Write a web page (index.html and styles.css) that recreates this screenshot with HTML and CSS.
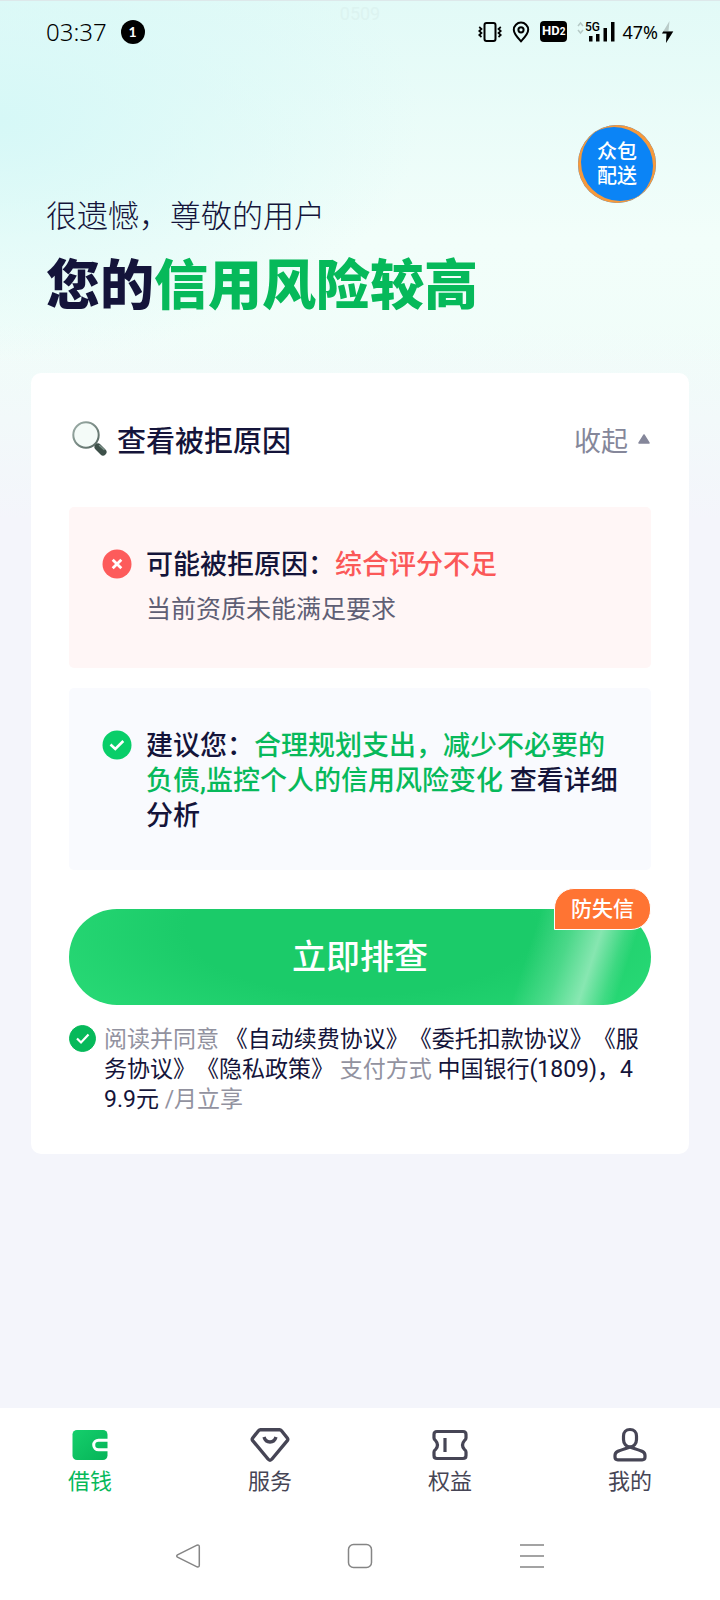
FILE: index.html
```html
<!DOCTYPE html>
<html lang="zh-CN">
<head>
<meta charset="utf-8">
<meta name="viewport" content="width=device-width, initial-scale=1">
<title>信用风险</title>
<link rel="stylesheet" href="styles.css">
</head>
<body>
<div class="screen">
  <div class="status">
    <span class="status-time">03:37</span>
    <span class="status-count">1</span>
    <span class="status-mark">0509</span>
    <div class="status-icons">
      <svg width="24" height="22" viewBox="0 0 24 22" fill="none" stroke="#000"><rect x="6.500" y="2" width="11" height="18" rx="2" stroke-width="2"/><path d="M1.200 6l2.300 2-2.300 2 2.300 2-2.300 2 2.300 2M22.800 6l-2.300 2 2.300 2-2.300 2 2.300 2-2.300 2" stroke-width="1.700"/></svg>
      <svg width="18" height="22" viewBox="0 0 18 22" fill="none" stroke="#000" stroke-width="2"><path d="M9 20.300C5.500 16.500 1.800 13 1.800 8.800a7.200 7.200 0 0 1 14.400 0c0 4.200-3.700 7.700-7.200 11.500z"/><circle cx="9" cy="8.800" r="2.600"/></svg>
      <span class="status-hd">HD<small>2</small></span>
      <svg class="signal" width="38" height="22" viewBox="0 0 38 22"><path d="M1 5l2.500-3 2.500 3M1 9l2.500 3 2.500-3" fill="none" stroke="#b5c9c6" stroke-width="1.500"/><text class="signal-label" x="8" y="10">5G</text><path d="M12 15h3.500v5.500h-3.500zM19 13h3.500v7.500h-3.500zM26.500 7h3.500v13.500h-3.500zM34 1h3.500v19.500h-3.500z"/></svg>
      <span class="status-battery">47%</span>
      <svg class="bolt" width="13" height="24" viewBox="0 0 13 24"><path d="M8.500 1L1 13.500h4.500L5 23l7.500-12H7.500z" fill="#b9cbc8"/><path d="M2.200 11.500L1 13.500h4.500L5 23l7.200-11.500z"/></svg>
    </div>
  </div>

  <header class="hero">
    <div class="hero-text">
      <p class="greeting">很遗憾，尊敬的用户</p>
      <h1 class="headline">您的<em>信用风险较高</em></h1>
    </div>
    <button class="float-entry" type="button">众包<br>配送</button>
  </header>

  <main class="card">
    <div class="card-head">
      <svg class="lens" width="36" height="36" viewBox="0 0 36 36"><defs><linearGradient id="rim" x1="0" y1="0" x2="1" y2="1"><stop offset="0" stop-color="#9fb0aa"/><stop offset="1" stop-color="#53645e"/></linearGradient></defs><path d="M23 23l3 3" stroke="#53645e" stroke-width="3"/><path d="M26 26l5 5" stroke="#3d5049" stroke-width="7" stroke-linecap="round"/><path d="M27.500 24.500l4.500 4" stroke="#7d9189" stroke-width="1.500" stroke-linecap="round"/><circle cx="14" cy="14" r="12.700" fill="#f4fbf8" stroke="url(#rim)" stroke-width="2"/></svg>
      <h2 class="card-title">查看被拒原因</h2>
      <button class="collapse" type="button">收起<svg width="14" height="12" viewBox="0 0 14 12"><path d="M7 2l5 8H2z" fill="#85879a" stroke="#85879a" stroke-width="1.500" stroke-linejoin="round"/></svg></button>
    </div>

    <section class="panel panel-reason">
      <svg class="panel-icon" width="30" height="30" viewBox="0 0 30 30"><circle cx="15" cy="15" r="14.500" fill="#fd5b5b"/><path d="M10.700 10.700l8.600 8.600M19.300 10.700l-8.600 8.600" stroke="#fff" stroke-width="2.800"/></svg>
      <div>
        <p class="panel-main">可能被拒原因：<span class="bad">综合评分不足</span></p>
        <p class="panel-sub">当前资质未能满足要求</p>
      </div>
    </section>

    <section class="panel panel-advice">
      <svg class="panel-icon" width="30" height="30" viewBox="0 0 30 30"><circle cx="15" cy="15" r="14.500" fill="#09ce69"/><path d="M8.500 14.500l4.800 4.500 8-8" fill="none" stroke="#fff" stroke-width="2.600"/></svg>
      <p class="panel-main">建议您：<span class="good">合理规划支出，减少不必要的负债,监控个人的信用风险变化</span> <a class="detail" href="#">查看详细分析</a></p>
    </section>

    <div class="action">
      <button class="submit" type="button">立即排查</button>
      <span class="tag">防失信</span>
    </div>

    <div class="agree">
      <input class="agree-box" type="checkbox" id="agree" checked>
      <p class="agree-text"><label class="muted" for="agree">阅读并同意</label> <a href="#">《自动续费协议》</a><a href="#">《委托扣款协议》</a><a href="#">《服务协议》</a><a href="#">《隐私政策》</a> <span class="muted">支付方式</span> 中国银行(1809)，49.9元 <span class="muted">/月立享</span></p>
    </div>
  </main>

  <footer class="bottom">
    <nav class="tabs">
      <a class="tab tab-on" href="#"><svg width="40" height="36" viewBox="0 0 40 36"><defs><linearGradient id="wallet" x1="0" y1="0" x2="1" y2="1"><stop offset="0" stop-color="#15cf6c"/><stop offset="1" stop-color="#06b458"/></linearGradient></defs><rect x="2.500" y="3" width="35" height="30" rx="4.500" fill="url(#wallet)"/><path d="M38.500 13.200H28.500a4.800 4.800 0 0 0 0 9.600h10" fill="none" stroke="#fff" stroke-width="3"/></svg><span>借钱</span></a>
      <a class="tab" href="#"><svg width="40" height="36" viewBox="0 0 40 36" fill="none" stroke="#464555" stroke-width="3.400" stroke-linejoin="round"><path d="M10.500 2.700h19q1.200 0 2 1l5.800 7.300q1 1.300 0 2.600L22 32q-2 2.400-4 0L2.700 13.600q-1-1.300 0-2.600l5.800-7.300q.8-1 2-1z"/><path d="M14 10q1.500 5 6 5t6-5"/></svg><span>服务</span></a>
      <a class="tab" href="#"><svg width="40" height="36" viewBox="0 0 40 36" fill="none" stroke="#464555" stroke-width="3.200" stroke-linejoin="round"><path d="M7 4.500h26q3 0 3 3V11q0 1.500-1.500 2.500-4 4.500 0 9Q36 23.500 36 25v3.500q0 3-3 3H7q-3 0-3-3V25q0-1.500 1.500-2.500 4-4.500 0-9Q4 12.500 4 11V7.500q0-3 3-3z"/><path d="M15 11v14"/></svg><span>权益</span></a>
      <a class="tab" href="#"><svg width="40" height="36" viewBox="0 0 40 36" fill="none" stroke="#464555" stroke-width="3.200" stroke-linejoin="round"><path d="M20 2.500c-4 0-6.500 2.600-6.500 6.500v3.500c0 4 2.800 7.500 6.500 7.500s6.500-3.500 6.500-7.500V9c0-3.900-2.500-6.500-6.500-6.500z"/><path d="M20 20c-4 1.500-9.500 3-12.500 4.500Q5 25.800 5 28.500V30q0 2.800 2.800 2.800h24.400Q35 32.800 35 30v-1.500q0-2.700-2.500-4C29.500 23 24 21.500 20 20z"/></svg><span>我的</span></a>
    </nav>
    <div class="sysnav">
      <button type="button" aria-label="返回"><svg width="26" height="26" viewBox="0 0 26 26" fill="none" stroke="#858585" stroke-width="1.500"><path d="M22 2.200L2.500 11.800q-1.500 1.200 0 2.400L22 23.800q2.300.7 2.300-1.600V3.800q0-2.300-2.300-1.600z"/></svg></button>
      <button type="button" aria-label="主页"><svg width="26" height="26" viewBox="0 0 26 26" fill="none" stroke="#858585" stroke-width="1.500"><rect x="1.500" y="1.500" width="23" height="23" rx="5"/></svg></button>
      <button type="button" aria-label="最近任务"><svg width="26" height="26" viewBox="0 0 26 26" stroke="#858585" stroke-width="1.600"><path d="M1 2h24M1 13h24M1 24h24"/></svg></button>
    </div>
  </footer>
</div>
</body>
</html>
```

FILE: styles.css
```css
* {
  box-sizing: border-box;
}

body,
h1,
h2,
p {
  margin: 0;
}

body {
  font-family: Roboto, "Noto Sans CJK SC", sans-serif;
  color: #14143a;
  background: #f4f5fb;
}

button {
  padding: 0;
  border: 0;
  background: none;
  font: inherit;
  color: inherit;
}

a {
  color: inherit;
  text-decoration: none;
}

svg {
  display: block;
  flex: none;
}

.screen {
  display: flex;
  flex-direction: column;
  min-height: 100vh;
  background:
    linear-gradient(to bottom, transparent 320px, #f4f5fb 520px),
    radial-gradient(420px 240px at 0 120px, #d6f8f7, transparent),
    linear-gradient(to bottom, #e2faf7, #f2fefa 240px, #f0fdf9 400px);
}

/* Status bar */
.status {
  position: relative;
  display: flex;
  align-items: center;
  height: 62px;
  padding: 0 46px;
  border-top: 1px solid #dde8ea;
  color: #000;
}

.status-time {
  font: 300 24px "Noto Sans", sans-serif;
}

.status-count {
  width: 24px;
  margin-left: 14px;
  border-radius: 50%;
  background: #000;
  color: #fff;
  font: bold 14px/24px Lato, sans-serif;
  text-align: center;
}

.status-mark {
  position: absolute;
  top: 4px;
  left: 0;
  right: 0;
  color: #dcf3f0;
  font-size: 18px;
  line-height: 18px;
  text-align: center;
}

.status-icons {
  display: flex;
  align-items: center;
  margin-left: auto;
}

.status-icons > * {
  margin-left: 10px;
}

.status-hd {
  padding: 0 2px;
  border-radius: 4px;
  background: #000;
  color: #fff;
  font: bold 13px/20px Roboto, sans-serif;
}

.status-hd small {
  font-size: 10px;
}

.status-icons .signal {
  margin-left: 10px;
}

.signal-label {
  font: 500 12px Roboto, sans-serif;
}

.status-battery {
  font: 18px "Noto Sans", sans-serif;
}

.status-icons .status-battery {
  margin-left: 7px;
}

.status-icons .bolt {
  margin-left: 3px;
}

/* Heading area */
.hero {
  display: flex;
  justify-content: space-between;
  align-items: flex-start;
  padding: 63px 64px 51px 46px;
}

.hero-text {
  padding-top: 71px;
}

.greeting {
  font-size: 31px;
  font-weight: 300;
  line-height: 42px;
}

.headline {
  margin-top: 14px;
  font-size: 54px;
  font-weight: 900;
  line-height: 70px;
}

.headline em {
  color: #06b95a;
  font-style: normal;
}

.float-entry {
  flex: none;
  width: 78px;
  height: 78px;
  border-radius: 50%;
  background: #0b84f6;
  box-shadow: inset -3px 2px 0 0 #f6993c, inset 3px -2px 0 0 #f6993c;
  color: #fff;
  font-size: 20px;
  font-weight: 500;
  line-height: 24px;
}

/* Card */
.card {
  margin: 0 31px;
  padding: 42px 38px 39px;
  border-radius: 10px;
  background: #fff;
}

.card-head {
  display: flex;
  align-items: center;
  height: 48px;
  margin-bottom: 44px;
}

.lens {
  margin: 0 9px 0 3px;
}

.card-title {
  font-size: 29px;
  font-weight: 500;
}

.collapse {
  display: flex;
  align-items: center;
  gap: 9px;
  margin-left: auto;
  color: #85879a;
  font-size: 27px;
}

.panel {
  display: flex;
  gap: 14px;
  padding: 41px 33px 39px;
  border-radius: 5px;
}

.panel-reason {
  background: #fff6f6;
}

.panel-advice {
  margin-top: 20px;
  padding-bottom: 36px;
  background: #f9fafe;
}

.panel-icon {
  margin-top: 1px;
}

.panel-main {
  font-size: 27px;
  font-weight: 500;
  line-height: 35px;
}

.panel-sub {
  margin-top: 8px;
  color: #5f5f75;
  font-size: 25px;
  line-height: 38px;
}

.bad {
  color: #fb5858;
}

.good {
  color: #07b95b;
}

.action {
  position: relative;
  margin-top: 39px;
}

.submit {
  display: block;
  width: 100%;
  height: 96px;
  padding-bottom: 6px;
  border-radius: 48px;
  background:
    linear-gradient(108deg, transparent 77%, rgba(255, 255, 255, 0.2) 83%, rgba(255, 255, 255, 0.46) 88%, rgba(255, 255, 255, 0.12) 92%, transparent 94%),
    radial-gradient(ellipse 60% 140% at 50% 20%, #1bcb69 50%, #29da76 100%);
  color: #fff;
  font-size: 34px;
  font-weight: 500;
}

.tag {
  position: absolute;
  top: -21px;
  right: 0;
  padding: 0 16px;
  border: 1px solid #fff;
  border-radius: 20px 20px 20px 0;
  background: #ff7433;
  color: #fff;
  font-size: 21px;
  font-weight: 500;
  line-height: 40px;
}

.agree {
  display: flex;
  gap: 8px;
  margin-top: 20px;
}

.agree-box {
  appearance: none;
  flex: none;
  width: 27px;
  height: 27px;
  margin: 0;
  border: 1px solid #06b95a;
  border-radius: 50%;
}

.agree-box:checked {
  background: #06b95a url("data:image/svg+xml,%3Csvg xmlns='http://www.w3.org/2000/svg' viewBox='0 0 25 25'%3E%3Cpath d='M7 12.500l4 4 7.500-8' fill='none' stroke='white' stroke-width='2.200'/%3E%3C/svg%3E") center / 25px no-repeat;
}

.agree-text {
  padding-right: 8px;
  font-size: 23px;
  line-height: 30px;
  word-break: break-all;
  text-spacing-trim: space-all;
}

.muted {
  color: #92929f;
}

/* Bottom navigation */
.bottom {
  margin-top: auto;
  background: #fff;
}

.tabs {
  display: grid;
  grid-template-columns: repeat(4, 1fr);
  padding-top: 19px;
}

.tab {
  display: flex;
  flex-direction: column;
  align-items: center;
  color: #464555;
  font-size: 22px;
  line-height: 37px;
}

.tab-on {
  color: #06b95a;
}

.sysnav {
  display: flex;
  justify-content: center;
  gap: 146px;
  padding: 43px 0 31px;
}
```
